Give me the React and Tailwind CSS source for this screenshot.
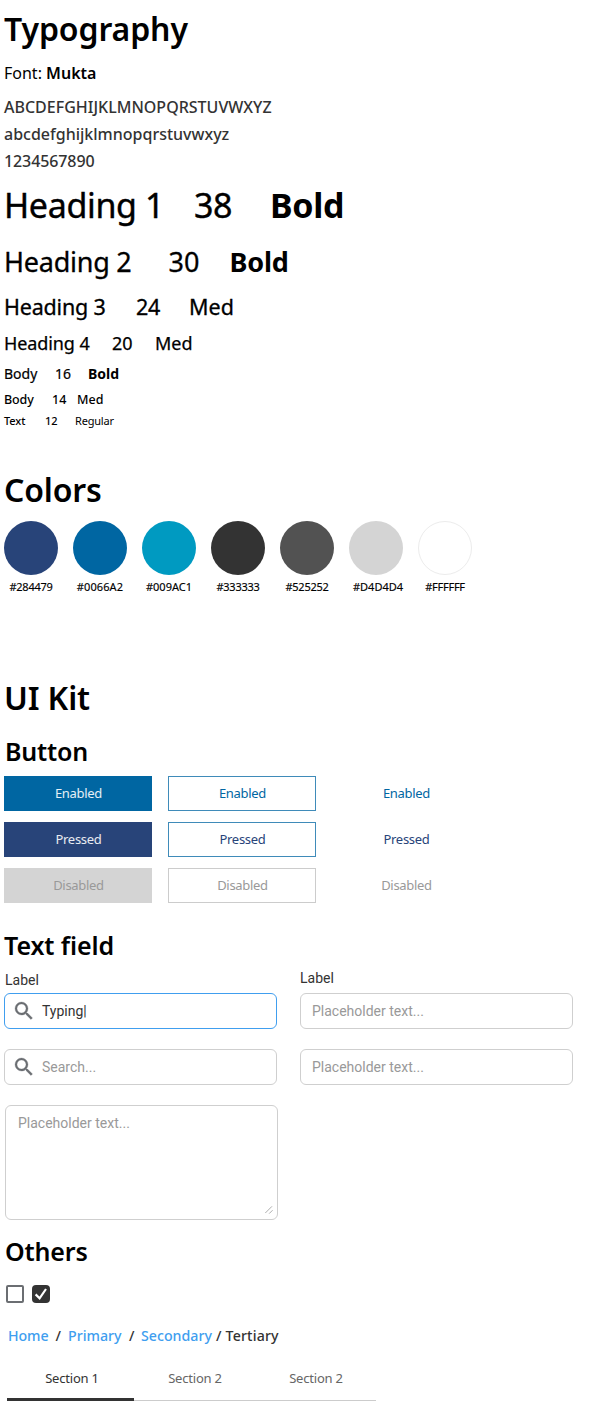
import React from 'react';

const swatches = [
  { hex: '#284479', fill: 'bg-[#284479]', label: 'tracking-[-0.25px]' },
  { hex: '#0066A2', fill: 'bg-[#0066a2]', label: 'tracking-[0.1px]' },
  { hex: '#009AC1', fill: 'bg-[#009ac1]', label: 'tracking-[0px]' },
  { hex: '#333333', fill: 'bg-[#333333]', label: 'tracking-[-0.25px]' },
  { hex: '#525252', fill: 'bg-[#525252]', label: 'tracking-[-0.25px]' },
  { hex: '#D4D4D4', fill: 'bg-[#d4d4d4]', label: 'pl-1 tracking-[0px]' },
  { hex: '#FFFFFF', fill: 'bg-white border border-[#ececec]', label: 'tracking-[-0.25px]' },
];

const buttons = [
  ['Enabled', 'bg-[#0066a2] text-white/90', 'border border-[#3f8bb9] text-[#0066a2]', 'text-[#0066a2]'],
  ['Pressed', 'bg-[#284479] text-white/90', 'border border-[#3f8bb9] text-[#284479]', 'text-[#284479]'],
  ['Disabled', 'bg-[#d4d4d4] text-[#999999]', 'border border-[#cccccc] text-[#999999]', 'text-[#999999]'],
];

function Scale({ className, name, nameClass, size, sizeClass, weight, weightClass = '' }) {
  return (
    <div className={`flex whitespace-nowrap ${className}`}>
      <span className={`shrink-0 ${nameClass}`}>{name}</span>
      <span className={`shrink-0 ${sizeClass}`}>{size}</span>
      <span className={weightClass}>{weight}</span>
    </div>
  );
}

function SearchIcon() {
  return (
    <svg viewBox="0 0 24 24" className="ml-[0.5px] size-6 shrink-0 fill-[#6b6e72] stroke-[#6b6e72] stroke-[0.3]">
      <path d="M15.5 14h-.79l-.28-.27A6.471 6.471 0 0 0 16 9.5 6.5 6.5 0 1 0 9.5 16c1.61 0 3.09-.59 4.23-1.57l.27.28v.79l5 4.99L20.49 19l-4.99-5zm-6 0C7.01 14 5 11.99 5 9.5S7.01 5 9.5 5 14 7.01 14 9.5 11.99 14 9.5 14z" />
    </svg>
  );
}

function Field({ children, search, active }) {
  return (
    <div
      className={`flex h-9 w-[273px] items-center rounded-md border font-['Roboto',sans-serif] text-sm ${
        active ? 'border-[#409eef] text-[#333333]' : 'border-[#cfcfcf] text-[#999999]'
      } ${search ? 'gap-[6.5px] pl-1.5' : 'pl-[11px]'}`}
    >
      {search && <SearchIcon />}
      <span>{children}</span>
    </div>
  );
}

export default function App() {
  return (
    <main className="h-[1414px] w-[591px] overflow-hidden bg-white pl-1 font-['Noto_Sans',sans-serif] text-black">
      <section>
        <h1 className="text-[32px] leading-[57px] font-semibold tracking-[-0.1px]">Typography</h1>
        <p className="text-base leading-8">
          Font: <b className="font-semibold">Mukta</b>
        </p>
        <div className="mt-[5px] text-base leading-[27px] font-medium text-[#333333]">
          <p>ABCDEFGHIJKLMNOPQRSTUVWXYZ</p>
          <p>abcdefghijklmnopqrstuvwxyz</p>
          <p className="tracking-[-0.1px]">1234567890</p>
        </div>
        <Scale className="-mt-px text-[34px] leading-[62px] [-webkit-text-stroke:0.4px]" name="Heading 1" nameClass="w-[190px] tracking-[-0.35px]" size="38" sizeClass="w-[76px] tracking-[-0.5px]" weight="Bold" weightClass="font-bold tracking-[-0.3px] [-webkit-text-stroke:0]" />
        <Scale className="text-[27px] leading-[51px] [-webkit-text-stroke:0.3px]" name="Heading 2" nameClass="w-[164.5px] tracking-[-0.25px]" size="30" sizeClass="w-[61px]" weight="Bold" weightClass="font-bold tracking-[-0.2px] [-webkit-text-stroke:0]" />
        <Scale className="text-[21.5px] leading-[39px] [-webkit-text-stroke:0.3px]" name="Heading 3" nameClass="w-[132px] tracking-[-0.2px]" size="24" sizeClass="w-[53px] tracking-[-0.3px]" weight="Med" />
        <Scale className="text-lg leading-[34px] [-webkit-text-stroke:0.25px]" name="Heading 4" nameClass="w-[108px] tracking-[-0.1px]" size="20" sizeClass="w-[43px]" weight="Med" />
        <Scale className="text-sm leading-[27px] [-webkit-text-stroke:0.2px]" name="Body" nameClass="w-[51px]" size="16" sizeClass="w-[33px]" weight="Bold" weightClass="font-bold [-webkit-text-stroke:0]" />
        <Scale className="text-[12.5px] leading-[25px] font-medium" name="Body" nameClass="w-12 tracking-[-0.1px]" size="14" sizeClass="w-[25px]" weight="Med" />
        <Scale className="text-[11px] leading-[18px] font-medium" name="Text" nameClass="w-[41px] tracking-[-0.1px]" size="12" sizeClass="w-[30px]" weight="Regular" weightClass="font-normal tracking-[-0.2px]" />
      </section>

      <section className="mt-[33px]">
        <h1 className="text-[32px] leading-[54px] font-semibold tracking-[-0.15px]">Colors</h1>
        <div className="mt-1 flex gap-[15px]">
          {swatches.map((s) => (
            <div key={s.hex} className="flex w-[54px] flex-col items-center gap-0.5">
              <div className={`size-[54px] rounded-full ${s.fill}`} />
              <span className={`text-[11px] leading-[19px] [-webkit-text-stroke:0.15px] ${s.label}`}>{s.hex}</span>
            </div>
          ))}
        </div>
      </section>

      <section className="mt-[74px]">
        <h1 className="text-[32px] leading-[55px] font-semibold tracking-[-0.15px]">UI Kit</h1>

        <h2 className="mt-2 pl-px text-[25px] leading-9 font-semibold tracking-[-0.2px]">Button</h2>
        <div className="mt-[7px] flex flex-col gap-[11px] text-[13px] tracking-[-0.3px]">
          {buttons.map(([label, solid, outline, plain]) => (
            <div key={label} className="flex gap-4">
              <button className={`h-[35px] w-[148px] pl-px ${solid}`}>{label}</button>
              <button className={`h-[35px] w-[148px] pl-px ${outline}`}>{label}</button>
              <button className={`h-[35px] w-[148px] pl-px ${plain}`}>{label}</button>
            </div>
          ))}
        </div>

        <h2 className="mt-[22px] text-[25px] leading-[41px] font-semibold tracking-[-0.1px]">Text field</h2>
        <div className="flex items-start gap-[23px]">
          <div className="flex w-[273px] flex-col">
            <label className="h-[27px] pl-px font-['Roboto',sans-serif] text-sm leading-7 text-[#333333]">Label</label>
            <Field search active>Typing|</Field>
            <div className="mt-5">
              <Field search>Search...</Field>
            </div>
            <div className="mt-5 ml-px flex h-[115px] w-[273px] items-start justify-between rounded-md border border-[#cfcfcf] pr-1 pl-3 font-['Roboto',sans-serif] text-sm text-[#999999]">
              <span className="pt-[7px]">Placeholder text...</span>
              <svg viewBox="0 0 8 8" className="mb-[5px] size-2 shrink-0 self-end fill-none stroke-[#999999] stroke-[0.8]">
                <path d="M.3 7 7 .3M4.2 7.6 7.6 4.2" />
              </svg>
            </div>
          </div>
          <div className="flex flex-col">
            <label className="h-[27px] font-['Roboto',sans-serif] text-sm leading-6 text-[#333333]">Label</label>
            <Field>Placeholder text...</Field>
            <div className="mt-5">
              <Field>Placeholder text...</Field>
            </div>
          </div>
        </div>

        <h2 className="mt-[11px] pl-px text-[25px] leading-[41px] font-semibold tracking-[-0.15px]">Others</h2>
        <div className="mt-[13px] flex gap-2 pl-0.5">
          <span className="size-[18px] rounded-xs border-2 border-[#6b6e72]" />
          <span className="flex size-[18px] items-center justify-center rounded bg-[#333333]">
            <svg viewBox="0 0 18 18" className="size-[18px] fill-none stroke-white stroke-[2.2]">
              <path d="M3.6 9.4 7.6 13.3 14 4" />
            </svg>
          </span>
        </div>

        <nav className="mt-[19px] flex pl-1 text-[14.2px] leading-[27px] font-medium whitespace-nowrap text-[#333333]">
          <a className="w-[47.5px] tracking-[-0.1px] text-[#409eef]">Home</a>
          <span className="w-[12.5px]">/</span>
          <a className="w-[61px] text-[#409eef]">Primary</a>
          <span className="w-[12px]">/</span>
          <a className="w-[75px] text-[#409eef]">Secondary</a>
          <span className="w-[9.5px]">/</span>
          <span className="tracking-[0.15px]">Tertiary</span>
        </nav>

        <div className="mt-[9px] ml-[3px] flex h-[43px] text-center text-[13px] leading-[41px] tracking-[-0.2px] text-[#666666]">
          <div className="w-[127px] border-b-3 border-[#333333] pl-[3px] text-[#333333]">Section 1</div>
          <div className="w-[121px] border-b border-[#cccccc] pl-px">Section 2</div>
          <div className="w-[121px] border-b border-[#cccccc] pl-px">Section 2</div>
        </div>
      </section>
    </main>
  );
}
